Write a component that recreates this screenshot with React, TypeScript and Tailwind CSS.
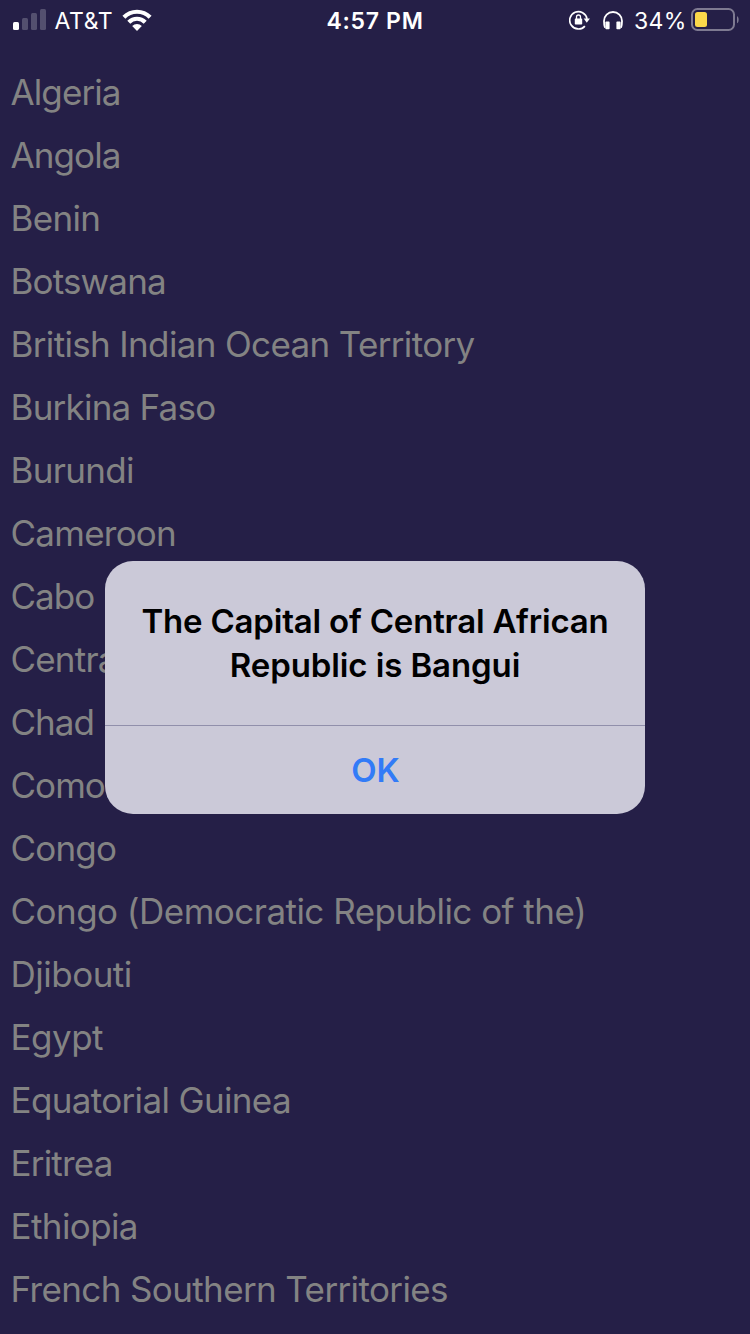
type Country = { name: string; tracking: string };

const countries: Country[] = [
  { name: 'Algeria', tracking: 'tracking-[-0.9px]' },
  { name: 'Angola', tracking: 'tracking-[-0.9px]' },
  { name: 'Benin', tracking: 'tracking-[-0.7px]' },
  { name: 'Botswana', tracking: 'tracking-[-0.85px]' },
  { name: 'British Indian Ocean Territory', tracking: 'tracking-[-0.65px]' },
  { name: 'Burkina Faso', tracking: 'tracking-[-0.77px]' },
  { name: 'Burundi', tracking: 'tracking-[-0.7px]' },
  { name: 'Cameroon', tracking: 'tracking-[-0.75px]' },
  { name: 'Cabo Verde', tracking: 'tracking-[-1px] [word-spacing:3px]' },
  { name: 'Central African Republic', tracking: 'tracking-[-0.8px]' },
  { name: 'Chad', tracking: 'tracking-[-1px]' },
  { name: 'Comoros', tracking: 'tracking-[-0.95px]' },
  { name: 'Congo', tracking: 'tracking-[-0.8px]' },
  { name: 'Congo (Democratic Republic of the)', tracking: 'tracking-[-0.53px]' },
  { name: 'Djibouti', tracking: 'tracking-[-0.5px]' },
  { name: 'Egypt', tracking: 'tracking-[-0.5px]' },
  { name: 'Equatorial Guinea', tracking: 'tracking-[-0.65px]' },
  { name: 'Eritrea', tracking: 'tracking-[-0.8px]' },
  { name: 'Ethiopia', tracking: 'tracking-[-0.6px]' },
  { name: 'French Southern Territories', tracking: 'tracking-[-0.62px]' },
];

function Signal() {
  return (
    <svg className="ml-[13px] h-[22px] w-[34px] shrink-0" viewBox="0 0 34 22" fill="#fff">
      <rect x="0" y="13" width="6" height="8" rx="1.5" />
      <rect x="9" y="9" width="6" height="12" rx="1.5" opacity="0.22" />
      <rect x="18" y="4" width="6" height="17" rx="1.5" opacity="0.22" />
      <rect x="27" y="0" width="6" height="21" rx="1.5" opacity="0.22" />
    </svg>
  );
}

function Wifi() {
  return (
    <svg className="h-[23px] w-[30px] shrink-0" viewBox="0 0 30 23" fill="none">
      <path d="M1.9 8.2a18.5 18.5 0 0 1 26.2 0" stroke="#fff" strokeWidth="4.2" />
      <path d="M6.8 13.2a11.5 11.5 0 0 1 16.4 0" stroke="#fff" strokeWidth="4.2" />
      <path d="M10.2 17.1a6.8 6.8 0 0 1 9.6 0L15 22z" fill="#fff" />
    </svg>
  );
}

function RotationLock() {
  return (
    <svg className="h-[20px] w-[22px] shrink-0" viewBox="0 0 22 20" fill="none">
      <path d="M15.9 16.1A8.7 8.7 0 1 1 18 8.8" stroke="#fff" strokeWidth="1.7" />
      <path d="M14.7 8.6h6.2l-3.1 4.1z" fill="#fff" />
      <rect x="5.8" y="8.6" width="7.4" height="5.9" rx="0.8" fill="#fff" />
      <path d="M7.5 9V7a2 2 0 0 1 4 0v2" stroke="#fff" strokeWidth="1.3" />
    </svg>
  );
}

function Headphones() {
  return (
    <svg className="h-[19px] w-[20px] shrink-0" viewBox="0 0 20 19" fill="none">
      <path
        d="M2 16.8C1.2 14.5 1 12.5 1 10a9 9 0 0 1 18 0c0 2.5-.2 4.5-1 6.8"
        stroke="#fff"
        strokeWidth="1.8"
      />
      <rect x="2.4" y="10.6" width="4.2" height="7.6" rx="0.8" fill="#fff" />
      <rect x="13.4" y="10.6" width="4.2" height="7.6" rx="0.8" fill="#fff" />
    </svg>
  );
}

function Battery() {
  return (
    <svg className="h-[24px] w-[48px] shrink-0" viewBox="0 0 48 24" fill="none">
      <rect x="1" y="1" width="42" height="21" rx="5.5" stroke="#7e7a91" strokeWidth="2" />
      <rect x="4" y="4" width="12" height="15" rx="2.5" fill="#fbd84a" />
      <path d="M46 8c2.2 1.3 2.2 6 0 7.3z" fill="#7e7a91" />
    </svg>
  );
}

function StatusBar() {
  return (
    <header className="grid h-10 grid-cols-3 items-center text-[23px] leading-[30px] text-white">
      <div className="flex items-center">
        <Signal />
        <span className="ml-[7.5px] w-[67.5px] pt-[2px] tracking-[0.6px] whitespace-nowrap">AT&amp;T</span>
        <Wifi />
      </div>
      <div className="pt-[2px] text-center font-semibold tracking-[0.7px]">4:57 PM</div>
      <div className="flex items-center justify-end pr-[11px]">
        <RotationLock />
        <span className="w-[12px]" />
        <Headphones />
        <span className="ml-[11px] w-[57px] pt-[2px] tracking-[0.3px] whitespace-nowrap">34%</span>
        <Battery />
      </div>
    </header>
  );
}

function Alert() {
  return (
    <div className="absolute inset-x-[105px] top-[561px] flex h-[253px] flex-col overflow-hidden rounded-[28px] bg-[#cbc9d8]">
      <div className="flex h-[164px] flex-col items-center pt-[38px] text-[33px] leading-[44px] font-semibold tracking-[-0.2px] whitespace-nowrap text-black">
        <span>The Capital of Central African</span>
        <span className="tracking-[-0.1px]">Republic is Bangui</span>
      </div>
      <button className="flex-1 border-t border-[#918fab] pl-[1px] text-[33px] leading-[88px] font-semibold text-[#327bf7]">
        OK
      </button>
    </div>
  );
}

export default function App() {
  return (
    <div className="relative h-[1334px] w-[750px] overflow-hidden bg-[#251f47] font-['Inter',sans-serif]">
      <StatusBar />
      <ul className="mt-[21px] pl-[10.5px] text-[35px] leading-[63px] whitespace-nowrap text-[#838383]">
        {countries.map((country) => (
          <li key={country.name} className="h-[63px]">
            <span className={country.tracking}>{country.name}</span>
          </li>
        ))}
      </ul>
      <Alert />
    </div>
  );
}
